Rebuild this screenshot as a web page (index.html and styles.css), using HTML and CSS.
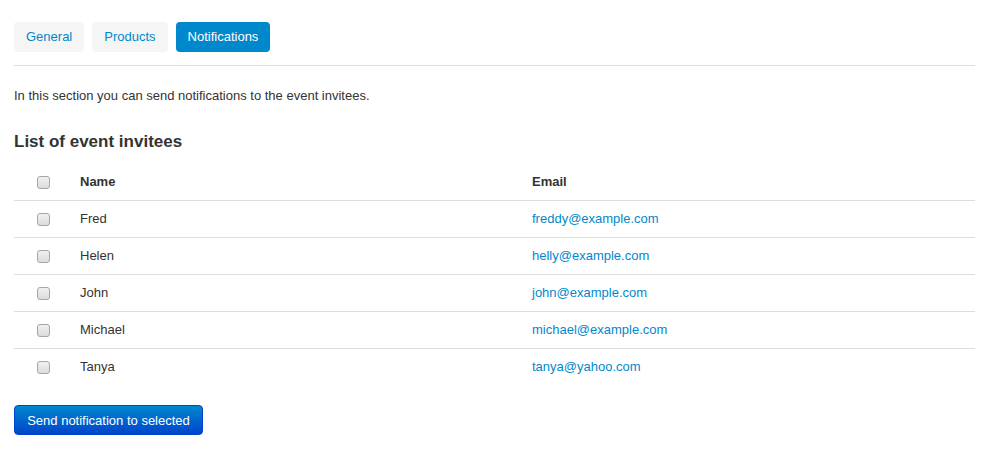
FILE: index.html
```html
<!DOCTYPE html>
<html>
<head>
<meta charset="utf-8">
<link rel="stylesheet" href="styles.css">
</head>
<body>
<div class="page">
  <nav class="tabs">
    <a class="tab">General</a>
    <a class="tab">Products</a>
    <a class="tab active">Notifications</a>
  </nav>
  <p class="intro">In this section you can send notifications to the event invitees.</p>
  <h2 class="title">List of event invitees</h2>
  <div class="table">
    <div class="row head">
      <div class="cell check"><span class="box"></span></div>
      <div class="cell">Name</div>
      <div class="cell">Email</div>
    </div>
    <div class="row">
      <div class="cell check"><span class="box"></span></div>
      <div class="cell">Fred</div>
      <div class="cell"><a class="link">freddy@example.com</a></div>
    </div>
    <div class="row">
      <div class="cell check"><span class="box"></span></div>
      <div class="cell">Helen</div>
      <div class="cell"><a class="link">helly@example.com</a></div>
    </div>
    <div class="row">
      <div class="cell check"><span class="box"></span></div>
      <div class="cell">John</div>
      <div class="cell"><a class="link">john@example.com</a></div>
    </div>
    <div class="row">
      <div class="cell check"><span class="box"></span></div>
      <div class="cell">Michael</div>
      <div class="cell"><a class="link">michael@example.com</a></div>
    </div>
    <div class="row">
      <div class="cell check"><span class="box"></span></div>
      <div class="cell">Tanya</div>
      <div class="cell"><a class="link">tanya@yahoo.com</a></div>
    </div>
  </div>
  <button class="btn">Send notification to selected</button>
</div>
</body>
</html>
```

FILE: styles.css
```css
* { box-sizing: border-box; }
html, body { margin: 0; padding: 0; background: #fff; }
body {
  font-family: "Liberation Sans", Arial, sans-serif;
  font-size: 13px;
  line-height: 18px;
  color: #333;
}
.page { padding: 22px 12px 0 14px; }
.tabs {
  display: flex;
  gap: 8px;
  padding-bottom: 13px;
  border-bottom: 1px solid #dddddd;
}
.tab {
  display: flex;
  align-items: center;
  height: 30px;
  padding: 0 12px;
  border-radius: 4px;
  background: #f5f5f5;
  color: #0088cc;
}
.tab.active { background: #0088cc; color: #fff; }
.intro { margin: 21px 0 0; }
.title {
  margin: 27px 0 0;
  font-size: 17px;
  line-height: 20px;
  font-weight: bold;
  color: #333;
}
.table { margin-top: 12px; }
.row {
  display: grid;
  grid-template-columns: 66px 452px 1fr;
  height: 37px;
  align-items: center;
  border-top: 1px solid #dddddd;
}
.row.head { border-top: none; height: 36px; font-weight: bold; }
.cell.check { padding-left: 23px; display: flex; align-items: center; }
.box {
  display: block;
  width: 13px;
  height: 13px;
  border: 1px solid #a6a6a6;
  border-radius: 3px;
  background: linear-gradient(#f0f0f0, #dcdcdc);
}
.link { color: #0088cc; }
.btn {
  margin-top: 20px;
  height: 30px;
  width: 189px;
  padding: 0;
  font-family: inherit;
  font-size: 13px;
  color: #fff;
  border: 1px solid #0044cc;
  border-radius: 4px;
  background: linear-gradient(#0088cc, #0044cc);
}
```
